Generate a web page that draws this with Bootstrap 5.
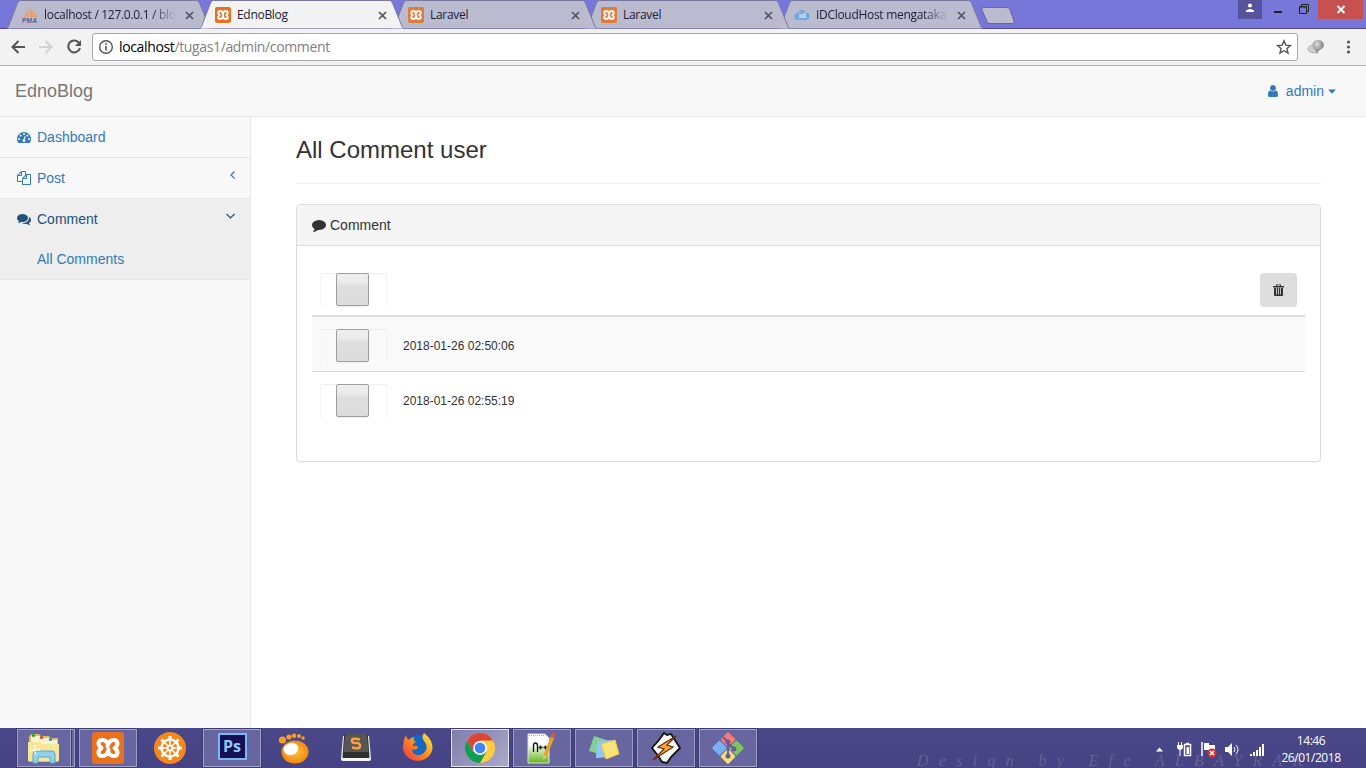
<!DOCTYPE html>
<html lang="en">
<head>
<meta charset="utf-8">
<meta name="viewport" content="width=device-width, initial-scale=1">
<title>EdnoBlog</title>
<link href="https://cdn.jsdelivr.net/npm/bootstrap@5.3.0/dist/css/bootstrap.min.css" rel="stylesheet">
<style>
body{height:768px;overflow:hidden;font:14px/20px "Liberation Sans",Arial,sans-serif;color:#333;background:#fff}
svg{display:block;flex:none}
a{text-decoration:none;color:#337ab7}
/* browser window */
.tabstrip{height:29px;background:#7777da;border-bottom:1px solid #524b94;padding-left:7px}
.btab{width:204px;height:29px;margin-right:-11px;position:relative;padding:1px 17px 0 15px;font:12px/28px "Open Sans","Noto Sans",sans-serif;color:#20203a;isolation:isolate;flex:none}
.btab .shape{position:absolute;left:0;top:0;z-index:-1}
.btab .ttl{flex:1;overflow:hidden;white-space:nowrap;margin-left:6px;letter-spacing:-.3px}
.btab .fade-end{-webkit-mask-image:linear-gradient(90deg,#000 80%,transparent);mask-image:linear-gradient(90deg,#000 80%,transparent)}
.newtab{margin:7px 0 0 9px}
.toolbar{height:37px;background:#f2f2f2;border-bottom:1px solid #b4b2b4;padding-left:10px}
.omni{width:1206px;height:28px;background:#fff;border:1px solid #a9a7a9;border-radius:3px;margin-left:10px;padding:0 5px;font:14px/26px "Open Sans","Noto Sans",sans-serif;color:#808080}
.omni .adr{letter-spacing:-.36px;margin-left:5px}
.omni b{font-weight:400;color:#000}
.wclose{width:45px;height:19px;background:#c75050}
.wuser{width:24px;height:19px;background:#54539c}
.winbtns{margin-right:3px}
/* admin page */
.topnav{height:51px;background:#f8f8f8;border-bottom:1px solid #e7e7e7;padding:0 30px 0 15px}
.brand{font-size:18px;color:#777}
.side{width:251px;background:#f8f8f8;border-right:1px solid #e7e7e7}
.side li{border-bottom:1px solid #e7e7e7}
.side a{height:40px;padding:0 15px 0 17px}
.side .arrow{margin:0 0 6px auto}
.side .open{background:#eee}
.side .open>a:first-child{color:#23527c}
.side .sub{padding-left:37px}
.main{padding:0 45px}
.main h1{font-size:24px;line-height:26px;font-weight:400;margin:20px 0;padding-bottom:20px;border-bottom:1px solid #eee}
.panel{height:258px;border:1px solid #ddd;border-radius:4px;box-shadow:0 1px 1px rgba(0,0,0,.05)}
.panel .card-header{height:41px;background:#f5f5f5;border-bottom:1px solid #ddd;padding:0 15px}
.rowline{padding:4px 8px 0;font-size:12px;height:55px;border-bottom:1px solid #ddd}
.rowline.first{height:56px;border-bottom:2px solid #ddd}
.rowline.odd{background:#f9f9f9}
.rowline.final{padding-top:2px;border:0}
.thumbbox{width:67px;height:34px;border:1px solid #f5f5f5;border-bottom:0;border-top-color:#eee;padding-left:15px;margin-right:16px}
.thumb{width:33px;height:33px;margin-top:-1px;border:1px solid #9e9e9e;border-radius:2px;background:linear-gradient(#efefef,#e9e9e9 30%,#dedede 40%,#dcdcdc);box-shadow:0 1px 1px #eee}
.trash{width:37px;height:34px;background:#ddd;border-radius:4px;border:0;padding:0}
/* desktop taskbar */
.taskbar{height:40px;background:linear-gradient(#4a4888,#454383);padding-left:17px;position:relative}
.task{width:58px;height:38px;margin:1px 4px 1px 0;flex:none}
.task.run{background:#6866a0;border:1px solid #a09fc5;box-shadow:0 0 0 1px #3c3b72}
.task.now{background:linear-gradient(135deg,#7f7dac,#aba9c8);border-color:#e6e6f0}
.stack{width:53px;border-right:1px solid #a09fc5;height:36px;box-shadow:1px 0 #3c3b72}
.sig{position:absolute;left:917px;top:24px;font:italic 16px/18px "Liberation Serif",serif;letter-spacing:10.3px;color:#64628f;white-space:nowrap}
.clock{width:80px;font:12px/17px "Open Sans","Noto Sans",sans-serif;letter-spacing:-.45px;color:#fff;margin-left:4px}
.tray{position:absolute;right:15px;top:1px;height:40px}
</style>
</head>
<body class="d-flex flex-column">
<svg width="0" height="0" class="position-absolute">
<defs>
<symbol id="xampp" viewBox="0 0 32 32"><rect width="32" height="32" rx="4" fill="#e8701f"/><g fill="none" stroke="#fff" stroke-width="4" stroke-linejoin="round" stroke-linecap="round"><path d="M16 13Q14.500 8 10.500 8Q6.500 8 6.500 11.500Q6.500 14 9.500 16Q6.500 18 6.500 20.500Q6.500 24 10.500 24Q14.500 24 16 19Q17.500 24 21.500 24Q25.500 24 25.500 20.500Q25.500 18 22.500 16Q25.500 14 25.500 11.500Q25.500 8 21.500 8Q17.500 8 16 13z"/><path d="M15 14l2 4" stroke-width="3"/></g></symbol>
<symbol id="x" viewBox="0 0 9 9"><path d="M1 1l7 7M8 1l-7 7" stroke="#55535f" stroke-width="1.700"/></symbol>
<symbol id="tab" viewBox="0 0 204 29"><path d="M0 28.500L1.500 26.500L10.500 3Q11.500 .5 13.500 .5H189.500Q191.500 .5 192.500 3L202 26.500L203.500 28.500" stroke-width="1"/></symbol>
</defs></svg>

<header>
 <div class="tabstrip d-flex">
  <div class="btab d-flex align-items-center" style="z-index:5"><svg class="shape" width="204" height="29" fill="#bbbbd0" stroke="#7b789f"><use href="#tab"/></svg>
   <svg width="16" height="16" viewBox="0 0 16 16"><path d="M2 10L6 2v8zM7 10L8 0l3 10zM11 10l-1-7 6 7z" fill="#eea05b"/><text x="0" y="15.500" font-family="Liberation Sans" font-size="6.500" font-style="italic" font-weight="bold" fill="#555b9a" textLength="15">PMA</text></svg>
   <span class="ttl fade-end">localhost / 127.0.0.1 / blog</span><svg width="9" height="9" class="ms-2"><use href="#x"/></svg></div>
  <div class="btab d-flex align-items-center" style="z-index:6"><svg class="shape" width="204" height="29" fill="#f2f2f2" stroke="#7b789f"><use href="#tab"/></svg>
   <svg width="16" height="16"><use href="#xampp"/></svg><span class="ttl">EdnoBlog</span><svg width="9" height="9"><use href="#x"/></svg></div>
  <div class="btab d-flex align-items-center" style="z-index:4"><svg class="shape" width="204" height="29" fill="#bbbbd0" stroke="#7b789f"><use href="#tab"/></svg>
   <svg width="16" height="16" opacity=".85"><use href="#xampp"/></svg><span class="ttl">Laravel</span><svg width="9" height="9"><use href="#x"/></svg></div>
  <div class="btab d-flex align-items-center" style="z-index:3"><svg class="shape" width="204" height="29" fill="#bbbbd0" stroke="#7b789f"><use href="#tab"/></svg>
   <svg width="16" height="16" opacity=".85"><use href="#xampp"/></svg><span class="ttl">Laravel</span><svg width="9" height="9"><use href="#x"/></svg></div>
  <div class="btab d-flex align-items-center" style="z-index:2"><svg class="shape" width="204" height="29" fill="#bbbbd0" stroke="#7b789f"><use href="#tab"/></svg>
   <svg width="16" height="16" viewBox="0 0 16 16"><path d="M4 13a3.500 3.500 0 0 1-.5-7A5 5 0 0 1 12.500 5.500a3.800 3.800 0 0 1 0 7.500z" fill="#70a8e5"/><path d="M6 7v4M6 5v1M11 5v6M10.500 8.500a1.500 1.500 0 1 0 0 1" fill="none" stroke="#d6e4f4" stroke-width="1.200"/></svg>
   <span class="ttl fade-end">IDCloudHost mengatakan</span><svg width="9" height="9" class="ms-2"><use href="#x"/></svg></div>
  <svg class="newtab" width="34" height="18" viewBox="0 0 34 18"><path d="M2 .5H26q2 0 3 2L33 14q.7 2.500-1 2.500H9q-2 0-3-2L1 3Q.5.5 2 .5z" fill="#bbbbd0" stroke="#67659f"/></svg>
  <div class="winbtns d-flex ms-auto align-items-start">
   <div class="wuser d-flex justify-content-center"><svg width="10" height="12" viewBox="0 0 10 12"><circle cx="5" cy="5.500" r="2.100" fill="#fff"/><path d="M1 12V10.500q4-3 8 0V12z" fill="#fff"/></svg></div>
   <svg width="56" height="19" viewBox="0 0 56 19"><path d="M12 12h8" stroke="#222" stroke-width="2"/><path d="M37.500 6.500h7v7h-7zM39.500 6V4.500h7v7H45" fill="none" stroke="#222"/><path d="M37 7h8" stroke="#222"/></svg>
   <div class="wclose"><svg width="45" height="19" viewBox="0 0 45 19"><path d="M19.500 6l7 7m0-7l-7 7" stroke="#fff" stroke-width="1.800"/></svg></div>
  </div>
 </div>
 <div class="toolbar d-flex align-items-center">
  <svg width="72" height="16" viewBox="0 0 72 16"><g fill="none" stroke-width="2"><path d="M15 8H2.500M8.500 2l-6 6 6 6" stroke="#555"/><path d="M29 8H41.500M35.500 2l6 6-6 6" stroke="#d2d2d2"/><path d="M69.300 4.200A6 6 0 1 0 70 9" stroke="#555"/></g><path d="M71 1v6h-6z" fill="#555"/></svg>
  <div class="omni d-flex align-items-center">
   <svg width="16" height="16" viewBox="0 0 16 16"><circle cx="8" cy="8" r="6.300" fill="none" stroke="#555" stroke-width="1.400"/><path d="M8 7v4.500M8 4.300v1.600" stroke="#555" stroke-width="1.600"/></svg>
   <span class="adr"><b>localhost</b>/tugas1/admin/comment</span>
   <svg class="ms-auto" width="16" height="16" viewBox="0 0 16 16"><path d="M8 1.800l1.800 4.300 4.700.4-3.600 3 1.100 4.600L8 11.700l-4 2.400 1.100-4.600-3.600-3 4.700-.4z" fill="none" stroke="#555" stroke-width="1.400"/></svg>
  </div>
  <svg width="60" height="18" viewBox="0 0 60 18"><defs><radialGradient id="ball" cx=".4" cy=".3"><stop offset="0" stop-color="#dedede"/><stop offset="1" stop-color="#8c8c8c"/></radialGradient></defs><ellipse cx="15.500" cy="11" rx="5.500" ry="3.800" fill="#cfcfcf" stroke="#aaa"/><path d="M14.500 7a5.700 5 0 1 1 9 4q-3 1-4.500 5-1-4-3-5a6 6 0 0 1-1.500-4z" fill="url(#ball)"/><g fill="#555"><circle cx="50.500" cy="4" r="1.600"/><circle cx="50.500" cy="9" r="1.600"/><circle cx="50.500" cy="14" r="1.600"/></g></svg>
 </div>
</header>

<nav class="topnav d-flex align-items-center justify-content-between">
 <a class="brand" href="#">EdnoBlog</a>
 <a href="#" class="d-flex align-items-center"><svg width="14" height="14" viewBox="0 0 1792 1792" fill="#337ab7"><path d="M1536 1399q0 109-62.500 187t-150.500 78h-854q-88 0-150.500-78t-62.500-187q0-85 8.500-160.500t31.500-152 58.500-131 94-89 134.500-34.500q131 128 313 128t313-128q76 0 134.500 34.500t94 89 58.500 131 31.500 152 8.500 160.500zm-256-887q0 159-112.500 271.500t-271.500 112.500-271.500-112.500-112.500-271.500 112.500-271.500 271.500-112.500 271.500 112.500 112.500 271.500z"/></svg><span style="margin:0 4px 0 6px">admin</span><svg width="8" height="5"><path d="M0 .5h8L4 4.700z" fill="#337ab7"/></svg></a>
</nav>

<div class="d-flex flex-grow-1">
 <aside class="side flex-shrink-0">
  <ul class="list-unstyled m-0">
   <li><a href="#" class="d-flex align-items-center"><svg width="14" height="14" viewBox="0 0 1792 1792" fill="#337ab7"><path d="M384 1152q0-53-37.500-90.500t-90.500-37.500-90.500 37.500-37.500 90.500 37.500 90.500 90.500 37.500 90.500-37.500 37.500-90.500zm192-448q0-53-37.500-90.500t-90.500-37.500-90.500 37.500-37.500 90.500 37.500 90.500 90.500 37.500 90.500-37.500 37.500-90.500zm428 481l101-382q6-26-7.500-48.500t-38.500-29.500-48 6.500-30 39.500l-101 382q-60 5-107 43.500t-63 98.500q-20 77 20 146t117 89 146-20 89-117q16-60-6-117t-72-91zm660-33q0-53-37.500-90.500t-90.500-37.500-90.500 37.500-37.500 90.500 37.500 90.500 90.500 37.500 90.500-37.500 37.500-90.500zm-640-640q0-53-37.500-90.500t-90.500-37.500-90.500 37.500-37.500 90.500 37.500 90.500 90.500 37.500 90.500-37.500 37.500-90.500zm448 192q0-53-37.500-90.500t-90.500-37.500-90.500 37.500-37.500 90.500 37.500 90.500 90.500 37.500 90.500-37.500 37.500-90.500zm320 448q0 261-141 483-19 29-54 29h-1402q-35 0-54-29-141-221-141-483 0-182 71-348t191-286 286-191 348-71 348 71 286 191 191 286 71 348z"/></svg><span style="margin-left:6px">Dashboard</span></a></li>
   <li><a href="#" class="d-flex align-items-center"><svg width="14" height="14" viewBox="0 0 1792 1792" fill="#337ab7"><path d="M1696 384q40 0 68 28t28 68v1216q0 40-28 68t-68 28h-960q-40 0-68-28t-28-68v-288h-544q-40 0-68-28t-28-68v-672q0-40 20-88t48-76l408-408q28-28 76-48t88-20h416q40 0 68 28t28 68v328q68-40 128-40h416zm-544 213l-299 299h299v-299zm-640-384l-299 299h299v-299zm196 647l316-316v-416h-384v416q0 40-28 68t-68 28h-416v640h512v-256q0-40 20-88t48-76zm956 804v-1152h-384v416q0 40-28 68t-68 28h-416v640h896z"/></svg><span style="margin-left:6px">Post</span><svg class="arrow" width="5" height="8"><path d="M4.500.5L1 4l3.500 3.500" fill="none" stroke="#337ab7" stroke-width="1.200"/></svg></a></li>
   <li class="open"><a href="#" class="d-flex align-items-center"><svg width="14" height="14" viewBox="0 0 1792 1792" fill="#23527c"><path d="M1408 768q0 139-94 257t-256.500 186.500-353.500 68.500q-86 0-176-16-124 88-278 128-36 9-86 16h-3q-11 0-20.500-8t-11.500-21q-1-3-1-6.500t.5-6.500 2-6l2.500-5 3.500-5.500 4-5 4.500-5 4-4.500q5-6 23-25t26-29.500 22.500-29 25-38.500 20.500-44q-124-72-195-177t-71-224q0-139 94-257t256.500-186.500 353.500-68.500 353.500 68.500 256.500 186.500 94 257zm384 256q0 120-71 224.500t-195 176.500q10 24 20.500 44t25 38.500 22.500 29 26 29.500 23 25q1 1 4 4.500t4.500 5 4 5 3.500 5.500l2.500 5 2 6 .5 6.500-1 6.500q-3 14-13 22t-22 7q-50-7-86-16-154-40-278-128-90 16-176 16-271 0-472-132 58 4 88 4 161 0 309-45t264-129q125-92 192-212t67-254q0-77-23-152 129 71 204 178t75 230z"/></svg><span style="margin-left:6px">Comment</span><svg class="arrow" width="9" height="6"><path d="M.5 1l4 4 4-4" fill="none" stroke="#23527c" stroke-width="1.200"/></svg></a>
    <a href="#" class="sub d-flex align-items-center">All Comments</a></li>
  </ul>
 </aside>
 <main class="main flex-grow-1">
  <h1>All Comment user</h1>
  <section class="card panel">
   <div class="card-header d-flex align-items-center"><svg width="14" height="14" viewBox="0 0 1792 1792" fill="#333"><path d="M1792 896q0 174-120 321.500t-326 233-450 85.500q-70 0-145-8-198 175-460 242-49 14-114 22-17 2-30.500-9t-17.500-29v-1q-3-4-.5-12t2-10 4.500-9.500l6-9 7-8.500 8-9q7-8 31-34.500t34.500-38 31-39.500 32.500-51 27-59 26-76q-157-89-247.500-220t-90.500-281q0-130 71-248.500t191-204.500 286-136.500 348-50.500q244 0 450 85.500t326 233 120 321.500z"/></svg><span style="margin-left:4px">Comment</span></div>
   <div class="card-body p-0 px-3" style="margin:15px -1px 0">
    <div class="rowline first d-flex align-items-center"><div class="thumbbox"><div class="thumb"></div></div><button class="trash ms-auto d-flex align-items-center justify-content-center" aria-label="Delete"><svg width="11" height="12" viewBox="0 0 11 12"><path d="M0 2h11v1.500H0zM3 2V.5h5V2H7V1.300H4V2zM1 4h9v7.200q0 .8-.8.8H1.800Q1 12 1 11.200z" fill="#333"/><path d="M3.500 4v6.500M5.500 4v6.500M7.500 4v6.500" stroke="#ccc" stroke-width=".9"/></svg></button></div>
    <div class="rowline odd d-flex align-items-center"><div class="thumbbox"><div class="thumb"></div></div><span>2018-01-26 02:50:06</span></div>
    <div class="rowline final d-flex align-items-center"><div class="thumbbox"><div class="thumb"></div></div><span>2018-01-26 02:55:19</span></div>
   </div>
  </section>
 </main>
</div>

<footer class="taskbar d-flex">
 <div class="task run"><div class="stack d-flex align-items-center justify-content-center"><svg width="34" height="32" viewBox="0 0 34 32"><path d="M2 5l2-3h8l2 2h8l2 2h7v24H2z" fill="#d9bf62"/><path d="M4 4h10v2h8v2h8v4H4z" fill="#f8f2d2"/><path d="M1 10h12l2 2h17v17H1z" fill="#f5e79a"/><path d="M5 3.500h3" stroke="#18a818" stroke-width="2.500"/><path d="M13 5.500h3" stroke="#d04818" stroke-width="2.500"/><path d="M22 7.500h3" stroke="#2688d8" stroke-width="2.500"/><path d="M6 31v-9q0-3 3-3h16q3 0 3 3v9h-5v-6H11v6z" fill="#8ed2ec" stroke="#5ba3c8"/><path d="M8 13v10M3 18h10" stroke="#fff"/></svg></div></div>
 <div class="task run d-flex align-items-center justify-content-center"><svg width="32" height="32"><use href="#xampp"/></svg></div>
 <div class="task d-flex align-items-center justify-content-center"><svg width="32" height="32" viewBox="0 0 32 32"><circle cx="16" cy="16" r="16" fill="#f7861b"/><g stroke="#fff" fill="none"><circle cx="16" cy="16" r="8.500" stroke-width="2.500"/><path d="M16 4v24M4 16h24M7.500 7.500l17 17M24.500 7.500l-17 17" stroke-width="1.500"/><path d="M16 4v3M16 25v3M4 16h3M25 16h3M7.500 7.500l2 2M24.500 24.500l-2-2M24.500 7.500l-2 2M7.500 24.500l2-2" stroke-width="3"/></g><circle cx="16" cy="16" r="3.500" fill="#fff"/><circle cx="16" cy="16" r="1.500" fill="#f7861b"/></svg></div>
 <div class="task run d-flex justify-content-center" style="padding-top:3px"><svg width="29" height="27" viewBox="0 0 29 27"><path d="M1 1h27v25H1z" fill="#160f55" stroke="#78baf2" stroke-width="2"/><text x="5" y="19" font-family="Open Sans" font-weight="bold" font-size="16" fill="#8fcaff" textLength="18">Ps</text></svg></div>
 <div class="task d-flex align-items-center justify-content-center"><svg width="32" height="32" viewBox="0 0 32 32"><defs><radialGradient id="gom"><stop offset="0" stop-color="#ffc23e"/><stop offset="1" stop-color="#f08a10"/></radialGradient></defs><ellipse cx="17" cy="20" rx="13.500" ry="11.500" fill="url(#gom)"/><ellipse cx="13" cy="17" rx="7.500" ry="6" fill="#fff" transform="rotate(-15 13 17)"/><g fill="#ff9b20"><circle cx="4.500" cy="8" r="3.600"/><circle cx="11" cy="5" r="2.600"/><circle cx="16" cy="3.800" r="2.200"/><circle cx="21" cy="4" r="2"/><circle cx="25" cy="6" r="1.800"/></g></svg></div>
 <div class="task d-flex align-items-center justify-content-center"><svg width="32" height="30" viewBox="0 0 32 30"><path d="M3 3L1 26q0 2 2 2h26q2 0 2-2L29 3z" fill="#f4f4f4"/><path d="M5 2h22q1 0 1 1l1.500 21q0 1-1 1h-25q-1 0-1-1L4 3q0-1 1-1z" fill="#2f2f2f"/><path d="M5 3q0-2 2-2h18q2 0 2 2l1.500 16h-25z" fill="#565656"/><path d="M20 6.500q-8-2-8 1t4 2.500 4 3-8 1.500" fill="none" stroke="#ff9c40" stroke-width="2.600"/></svg></div>
 <div class="task d-flex align-items-center justify-content-center"><svg width="32" height="32" viewBox="0 0 32 32"><defs><linearGradient id="fox" x1="1" x2="0" y2="1"><stop offset=".1" stop-color="#ffe23a"/><stop offset=".5" stop-color="#ff8a1c"/><stop offset="1" stop-color="#e8304a"/></linearGradient></defs><circle cx="16" cy="14" r="11.500" fill="#1668c4"/><path d="M4 3Q1 8 1 17A15 14.500 0 0 0 30.500 17Q31 8 22 1Q19 5 22 9Q26 13 24 18Q21 24 15 23Q10 22 10 17Q13 19 16 16L15 14H11Q10 12 14 10Q11 9 12 5Q8 6 7 8Q4 6 4 3z" fill="url(#fox)"/></svg></div>
 <div class="task run now d-flex align-items-center justify-content-center"><svg width="30" height="30" viewBox="0 0 30 30"><circle cx="15" cy="15" r="15" fill="#ffcd40"/><path d="M2 7.500A15 15 0 0 0 15 30l6.500-11.200H8.500z" fill="#0f9d58"/><path d="M2 7.500A15 15 0 0 1 28 7.500H15L8.500 18.700z" fill="#db4437"/><circle cx="15" cy="15" r="7" fill="#fff"/><circle cx="15" cy="15" r="5.400" fill="#4285f4"/></svg></div>
 <div class="task run d-flex align-items-center justify-content-center"><svg width="32" height="32" viewBox="0 0 32 32"><defs><linearGradient id="np" x2="0" y2="1"><stop offset=".35" stop-color="#fff"/><stop offset="1" stop-color="#63b518"/></linearGradient></defs><path d="M2 2h17l4 4v25H2z" fill="url(#np)" stroke="#ddd"/><path d="M3 3.500h15" stroke="#aaa" stroke-dasharray="1 1"/><path d="M7.500 20v-6q0-3 2-3t2 3v6M12.500 15.500h4M14.500 13.500v4M17.500 15.500h4M19.500 13.500v4" stroke="#111" stroke-width="1.300" fill="none"/><path d="M19 24L27 4" stroke="#e6a02b" stroke-width="3.500"/><path d="M26.300 5.500L28 1" stroke="#d75745" stroke-width="3.500"/><path d="M17.500 23l-.5 5 3.500-4z" fill="#ecc490"/></svg></div>
 <div class="task run d-flex align-items-center justify-content-center"><svg width="32" height="28" viewBox="0 0 32 28"><path d="M6 2l12 4-4 15L1 17z" fill="#83cf92"/><path d="M9 7l14-1v17l-15 1z" fill="#8fc7f6"/><path d="M13 10l14-4 4 14-13 5z" fill="#fbe278" stroke="#edc64b"/></svg></div>
 <div class="task run d-flex align-items-center justify-content-center"><svg width="32" height="32" viewBox="0 0 32 32"><path d="M14 1l3 2 4-1 9 14-9 9-4 6-5-1-3-5-7-9 7-8z" fill="#fff" stroke="#111" stroke-width="1.800"/><path d="M26 4L8 15l6 2L3 28l20-13-6-2z" fill="#f9a737" stroke="#6b2c0b" stroke-width="1.300"/></svg></div>
 <div class="task run d-flex align-items-center justify-content-center"><svg width="34" height="34" viewBox="-17 -17 34 34"><g transform="rotate(45)"><rect x="-11.500" y="-11.500" width="11" height="11" rx="1.500" fill="#f67c7c"/><rect x=".5" y="-11.500" width="11" height="11" rx="1.500" fill="#80c65a"/><rect x="-11.500" y=".5" width="11" height="11" rx="1.500" fill="#7aaef5"/><rect x=".5" y=".5" width="11" height="11" rx="1.500" fill="#fade74"/></g><path d="M-5-11L0-6V8M0-5l6 6" fill="none" stroke="#625f98" stroke-width="2"/><g fill="#625f98"><circle cy="-6" r="2.500"/><circle cx="6" cy="1" r="2.500"/><circle cy="8" r="2.500"/></g></svg></div>
 <div class="sig">Design by Efe ALBAYRAK</div>
 <div class="tray d-flex align-items-center">
  <svg width="112" height="20" viewBox="0 0 112 20"><path d="M1 12.500l3.500-4 3.500 4z" fill="#fff"/><g transform="translate(22 3)"><path d="M1.500 0v3M4.500 0v3M3 7v7" stroke="#fff"/><path d="M0 3h6v3L4 8H2L0 6z" fill="#fff"/><path d="M7.500 2.500h6v11h-6zM9 1.500h3" fill="#454383" stroke="#fff" stroke-width="1.500"/><path d="M9.500 5h2.500v7H9.500z" fill="#fff"/></g><g transform="translate(46 3)"><path d="M1 0v14" stroke="#fff" stroke-width="1.500"/><path d="M3 1h5v2h6v7H8V8H3z" fill="#fff"/><circle cx="11" cy="11" r="4.500" fill="#dc2e2e"/><path d="M9 9l4 4m0-4l-4 4" stroke="#fff" stroke-width="1.500"/></g><g transform="translate(70 3)"><path d="M0 5h3l4-4v13l-4-4H0z" fill="#fff"/><path d="M9 5q2 2.500 0 5M11 3q4 4.500 0 9" stroke="#fff" fill="none"/></g><g transform="translate(94 3)" fill="#fff"><path d="M1 12h2v2H1zM4 10h2v4H4zM7 8h2v6H7zM10 5h2v9h-2zM13 2h2v12h-2z"/></g></svg>
  <div class="clock text-center">14:46<br>26/01/2018</div>
 </div>
</footer>
<script src="https://cdn.jsdelivr.net/npm/bootstrap@5.3.0/dist/js/bootstrap.bundle.min.js"></script>
</body>
</html>
